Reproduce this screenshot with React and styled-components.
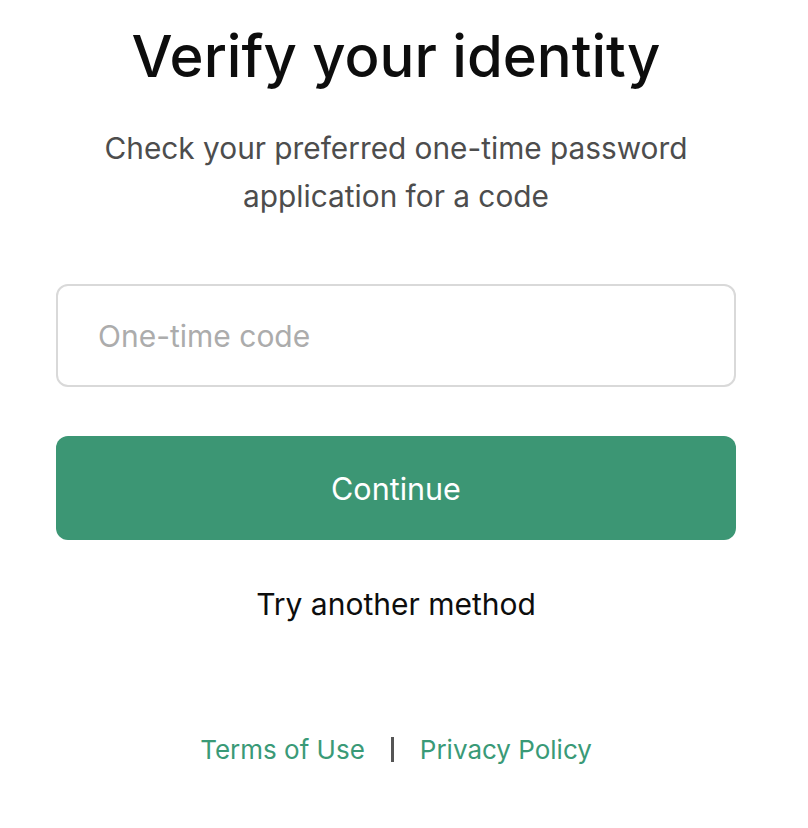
import React from 'react';
import styled, { createGlobalStyle } from 'styled-components';

const brandGreen = '#3c9674';
const linkGreen = '#3a9a77';

const GlobalStyle = createGlobalStyle`
  body {
    margin: 0;
    background: #fff;
    font-family: Inter, "Noto Sans", "Liberation Sans", sans-serif;
    -webkit-font-smoothing: antialiased;
  }
`;

const Page = styled.main`
  width: 792px;
  display: flex;
  flex-direction: column;
  align-items: center;
  padding-top: 23px;
`;

const Title = styled.h1`
  margin: 0;
  font-size: 58px;
  font-weight: 500;
  line-height: 66px;
  color: #0d0d0d;
`;

const Subtitle = styled.p`
  margin: 35px 0 0;
  width: 640px;
  text-align: center;
  font-size: 29.8px;
  line-height: 48px;
  color: #4d4d4d;
`;

const Form = styled.form`
  width: 680px;
  margin-top: 64px;
  display: flex;
  flex-direction: column;
`;

const CodeInput = styled.input`
  box-sizing: border-box;
  height: 103px;
  width: 100%;
  padding: 0 40px;
  border: 2px solid #d9d9d9;
  border-radius: 12px;
  font-family: inherit;
  font-size: 30px;
  color: #0d0d0d;
  outline: none;

  &::placeholder {
    color: #acacac;
  }
`;

const ContinueButton = styled.button`
  margin-top: 49px;
  height: 104px;
  width: 100%;
  border: none;
  border-radius: 12px;
  background-color: ${brandGreen};
  color: #fff;
  font-family: inherit;
  font-size: 30.5px;
  cursor: pointer;
`;

const AltLink = styled.a`
  margin-top: 46px;
  font-size: 30px;
  color: #0d0d0d;
  text-decoration: none;
  cursor: pointer;
`;

const Footer = styled.footer`
  margin-top: 112px;
  display: flex;
  align-items: center;
  gap: 26px;
  font-size: 26px;
`;

const FooterLink = styled.a`
  color: ${linkGreen};
  text-decoration: none;
`;

const Divider = styled.span`
  width: 3px;
  height: 25px;
  background: #555;
`;

export default function App() {
  return (
    <>
      <GlobalStyle />
      <Page>
        <Title>Verify your identity</Title>
        <Subtitle>Check your preferred one-time password application for a code</Subtitle>
        <Form onSubmit={e => e.preventDefault()}>
          <CodeInput placeholder="One-time code" />
          <ContinueButton type="submit">Continue</ContinueButton>
        </Form>
        <AltLink>Try another method</AltLink>
        <Footer>
          <FooterLink href="#">Terms of Use</FooterLink>
          <Divider />
          <FooterLink href="#">Privacy Policy</FooterLink>
        </Footer>
      </Page>
    </>
  );
}
